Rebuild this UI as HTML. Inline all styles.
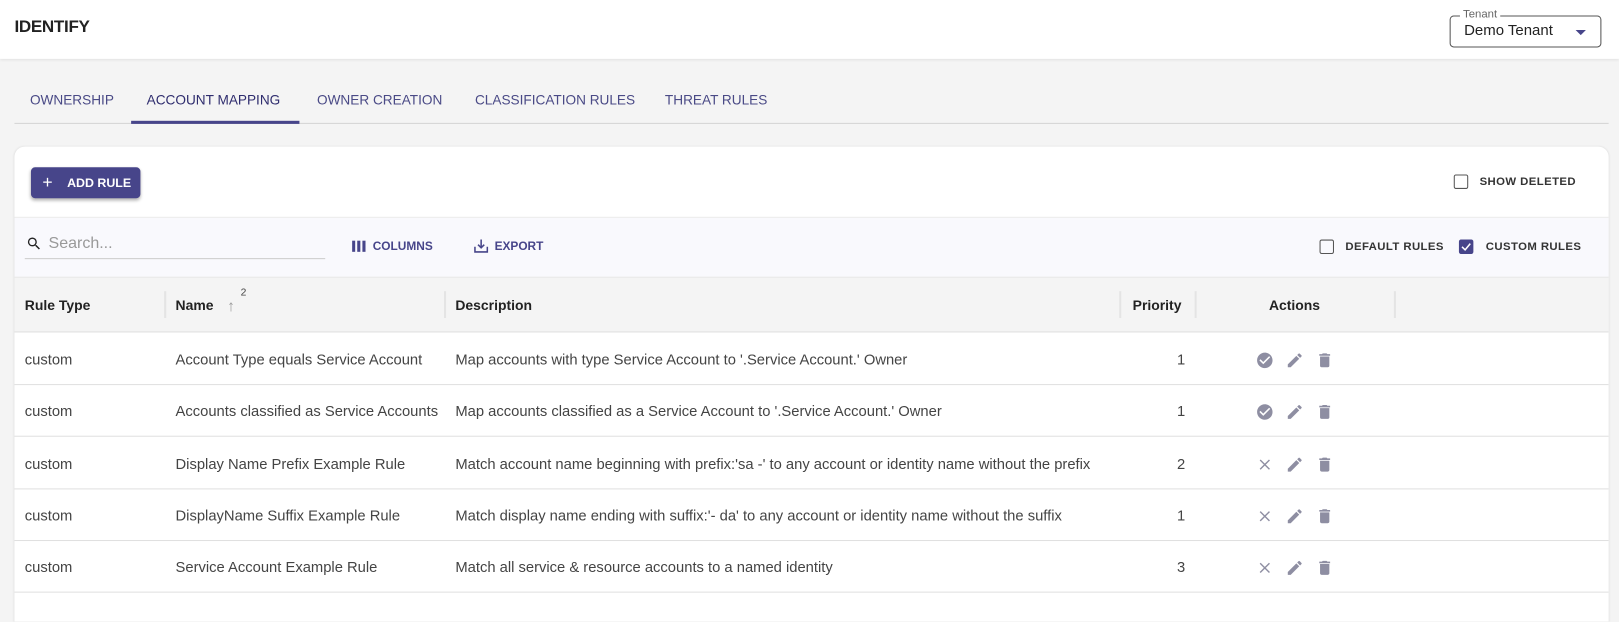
<!DOCTYPE html>
<html><head><meta charset="utf-8"><style>
*{box-sizing:border-box;margin:0;padding:0}
html,body{width:1619px;height:603px;overflow:hidden;background:#f4f4f4}
body{font-family:"Liberation Sans",Arial,sans-serif;color:#333}
#w{position:absolute;left:0;top:0;width:1568px;height:584px;transform:scale(1.0325);transform-origin:0 0}
.a{position:absolute;white-space:nowrap}
.hdr{position:absolute;left:0;top:0;width:1568px;height:57px;background:#fff;box-shadow:0 1px 3px rgba(0,0,0,.08)}
.tab{position:absolute;top:89px;font-size:13.2px;color:#4a4a86}
.card{position:absolute;left:14px;top:142px;width:1544px;height:460px;background:#fff;border-radius:10px 10px 0 0;box-shadow:0 0 2px rgba(0,0,0,.1);overflow:hidden}
.cb{position:absolute;width:14px;height:14px;border:1.5px solid #555;border-radius:2px}
.lbl{font-size:11px;font-weight:bold;letter-spacing:.4px;color:#333}
.th{font-size:13.5px;font-weight:bold;color:#222;top:146px}
.sep{position:absolute;top:140px;width:2px;height:26px;background:#e4e4e4}
.row{position:absolute;left:0;width:1544px;height:50px;border-bottom:1px solid #e0e0e0;font-size:14.3px;color:#444}
.row span{position:absolute;top:18px;white-space:nowrap}
.ic{position:absolute;top:17px}
</style></head><body><div id="w">
<div class="hdr"></div>
<div class="a" style="left:14px;top:17px;font-size:16.5px;color:#222;font-weight:bold;letter-spacing:-.3px">IDENTIFY</div>
<div style="position:absolute;left:1404px;top:15px;width:147px;height:31px;border:1px solid #555;border-radius:4px"></div>
<div class="a" style="left:1414px;top:8px;font-size:11px;color:#666;background:#fff;padding:0 3px">Tenant</div>
<div class="a" style="left:1418px;top:22px;font-size:14.5px;color:#222">Demo Tenant</div>
<div style="position:absolute;left:1526px;top:29px;border-left:5px solid transparent;border-right:5px solid transparent;border-top:5px solid #47458a"></div>

<div class="tab" style="left:29px">OWNERSHIP</div>
<div class="tab" style="left:142px;color:#2f2d6e">ACCOUNT MAPPING</div>
<div class="tab" style="left:307px">OWNER CREATION</div>
<div class="tab" style="left:460px">CLASSIFICATION RULES</div>
<div class="tab" style="left:644px">THREAT RULES</div>
<div style="position:absolute;left:14px;top:119px;width:1544px;height:1px;background:#d4d4d4"></div>
<div style="position:absolute;left:127px;top:117px;width:163px;height:3px;background:#47458a"></div>

<div class="card">
 <div style="position:absolute;left:16px;top:20px;width:106px;height:30px;background:#47458a;border-radius:4px;box-shadow:0 2px 3px rgba(0,0,0,.3);color:#fff;font-size:12px;font-weight:bold">
  <span class="a" style="left:11px;top:5px;font-size:17px;font-weight:normal">+</span><span class="a" style="left:35px;top:8px">ADD RULE</span></div>
 <div class="cb" style="left:1394px;top:27px"></div>
 <div class="a lbl" style="left:1419px;top:28px">SHOW DELETED</div>
 <div style="position:absolute;left:0;top:68px;width:1544px;height:58px;background:#f9f9fd;border-top:1px solid #ececec"></div>
 <svg class="a" style="left:11px;top:86px" width="16" height="16" viewBox="0 0 24 24"><path d="M15.5 14h-.79l-.28-.27A6.47 6.47 0 0016 9.5 6.5 6.5 0 109.5 16c1.61 0 3.09-.59 4.230-1.57l.27.28v.79l5 4.99L20.49 19l-4.99-5zm-6 0C7.01 14 5 11.99 5 9.5S7.01 5 9.5 5 14 7.01 14 9.5 11.99 14 9.5 14z" fill="#222"/></svg>
 <div class="a" style="left:33px;top:85px;font-size:15.5px;color:#999">Search...</div>
 <div style="position:absolute;left:10px;top:108px;width:291px;height:1px;background:#ccc"></div>
 <svg class="a" style="left:327px;top:91px" width="14" height="11" viewBox="0 0 14 11"><rect x="0" y="0" width="3" height="11" fill="#47458a"/><rect x="5" y="0" width="3" height="11" fill="#47458a"/><rect x="10" y="0" width="3" height="11" fill="#47458a"/></svg>
 <div class="a" style="left:347px;top:91px;font-size:11.5px;font-weight:bold;color:#47458a">COLUMNS</div>
 <svg class="a" style="left:445px;top:89px" width="14" height="14" viewBox="0 0 14 14"><path d="M1 8v5h12V8M7 1v8M4 6l3 3 3-3" stroke="#47458a" stroke-width="1.5" fill="none"/></svg>
 <div class="a" style="left:465px;top:91px;font-size:11.5px;font-weight:bold;color:#47458a">EXPORT</div>
 <div class="cb" style="left:1264px;top:90px"></div>
 <div class="a lbl" style="left:1289px;top:91px">DEFAULT RULES</div>
 <div class="cb" style="left:1399px;top:90px;background:#47458a;border-color:#47458a"><svg style="position:absolute;left:1px;top:1px" width="10" height="10" viewBox="0 0 10 10"><path d="M1 5l3 3 5-6" stroke="#fff" stroke-width="1.5" fill="none"/></svg></div>
 <div class="a lbl" style="left:1425px;top:91px">CUSTOM RULES</div>
 <div style="position:absolute;left:0;top:126px;width:1544px;height:54px;background:#f4f4f4;border-top:1px solid #e8e8e8;border-bottom:1px solid #e0e0e0"></div>
 <div class="a th" style="left:10px">Rule Type</div>
 <div class="sep" style="left:145px"></div>
 <div class="a th" style="left:156px">Name</div>
 <div class="a" style="left:206px;top:146px;color:#999;font-size:15px">↑</div>
 <div class="a" style="left:219px;top:136px;font-size:10px;color:#444">2</div>
 <div class="sep" style="left:416px"></div>
 <div class="a th" style="left:427px">Description</div>
 <div class="sep" style="left:1070px"></div>
 <div class="a th" style="left:1083px">Priority</div>
 <div class="sep" style="left:1143px"></div>
 <div class="a th" style="left:1215px">Actions</div>
 <div class="sep" style="left:1336px"></div>
 <div class="row" style="top:181px"><span style="left:10px">custom</span><span style="left:156px">Account Type equals Service Account</span><span style="left:427px">Map accounts with type Service Account to '.Service Account.' Owner</span><span style="left:1126px">1</span>
  <svg class="ic" style="left:1202px" width="18" height="18" viewBox="0 0 24 24"><path d="M12 2C6.48 2 2 6.48 2 12s4.48 10 10 10 10-4.48 10-10S17.52 2 12 2zm-2 15l-5-5 1.41-1.41L10 14.17l7.59-7.59L19 8l-9 9z" fill="#8e8ea2"/></svg>
  <svg class="ic" style="left:1231px" width="18" height="18" viewBox="0 0 24 24"><path d="M3 17.25V21h3.75L17.81 9.94l-3.75-3.75L3 17.25zM20.71 7.04a1 1 0 000-1.41l-2.34-2.34a1 1 0 00-1.41 0l-1.83 1.83 3.75 3.75 1.83-1.83z" fill="#8e8ea2"/></svg>
  <svg class="ic" style="left:1260px" width="18" height="18" viewBox="0 0 24 24"><path d="M6 19c0 1.1.9 2 2 2h8c1.1 0 2-.9 2-2V7H6v12zM19 4h-3.5l-1-1h-5l-1 1H5v2h14V4z" fill="#8e8ea2"/></svg></div>
 <div class="row" style="top:231px"><span style="left:10px">custom</span><span style="left:156px">Accounts classified as Service Accounts</span><span style="left:427px">Map accounts classified as a Service Account to '.Service Account.' Owner</span><span style="left:1126px">1</span>
  <svg class="ic" style="left:1202px" width="18" height="18" viewBox="0 0 24 24"><path d="M12 2C6.48 2 2 6.48 2 12s4.48 10 10 10 10-4.48 10-10S17.52 2 12 2zm-2 15l-5-5 1.41-1.41L10 14.17l7.59-7.59L19 8l-9 9z" fill="#8e8ea2"/></svg>
  <svg class="ic" style="left:1231px" width="18" height="18" viewBox="0 0 24 24"><path d="M3 17.25V21h3.75L17.81 9.94l-3.75-3.75L3 17.25zM20.71 7.04a1 1 0 000-1.41l-2.34-2.34a1 1 0 00-1.41 0l-1.83 1.83 3.75 3.75 1.83-1.83z" fill="#8e8ea2"/></svg>
  <svg class="ic" style="left:1260px" width="18" height="18" viewBox="0 0 24 24"><path d="M6 19c0 1.1.9 2 2 2h8c1.1 0 2-.9 2-2V7H6v12zM19 4h-3.5l-1-1h-5l-1 1H5v2h14V4z" fill="#8e8ea2"/></svg></div>
 <div class="row" style="top:282px"><span style="left:10px">custom</span><span style="left:156px">Display Name Prefix Example Rule</span><span style="left:427px">Match account name beginning with prefix:'sa -' to any account or identity name without the prefix</span><span style="left:1126px">2</span>
  <svg class="ic" style="left:1202px" width="18" height="18" viewBox="0 0 24 24"><path d="M6 6l12 12M18 6L6 18" stroke="#8e8ea2" stroke-width="1.8"/></svg>
  <svg class="ic" style="left:1231px" width="18" height="18" viewBox="0 0 24 24"><path d="M3 17.25V21h3.75L17.81 9.94l-3.75-3.75L3 17.25zM20.71 7.04a1 1 0 000-1.41l-2.34-2.34a1 1 0 00-1.41 0l-1.83 1.83 3.75 3.75 1.83-1.83z" fill="#8e8ea2"/></svg>
  <svg class="ic" style="left:1260px" width="18" height="18" viewBox="0 0 24 24"><path d="M6 19c0 1.1.9 2 2 2h8c1.1 0 2-.9 2-2V7H6v12zM19 4h-3.5l-1-1h-5l-1 1H5v2h14V4z" fill="#8e8ea2"/></svg></div>
 <div class="row" style="top:332px"><span style="left:10px">custom</span><span style="left:156px">DisplayName Suffix Example Rule</span><span style="left:427px">Match display name ending with suffix:'- da' to any account or identity name without the suffix</span><span style="left:1126px">1</span>
  <svg class="ic" style="left:1202px" width="18" height="18" viewBox="0 0 24 24"><path d="M6 6l12 12M18 6L6 18" stroke="#8e8ea2" stroke-width="1.8"/></svg>
  <svg class="ic" style="left:1231px" width="18" height="18" viewBox="0 0 24 24"><path d="M3 17.25V21h3.75L17.81 9.94l-3.75-3.75L3 17.25zM20.71 7.04a1 1 0 000-1.41l-2.34-2.34a1 1 0 00-1.41 0l-1.83 1.83 3.75 3.75 1.83-1.83z" fill="#8e8ea2"/></svg>
  <svg class="ic" style="left:1260px" width="18" height="18" viewBox="0 0 24 24"><path d="M6 19c0 1.1.9 2 2 2h8c1.1 0 2-.9 2-2V7H6v12zM19 4h-3.5l-1-1h-5l-1 1H5v2h14V4z" fill="#8e8ea2"/></svg></div>
 <div class="row" style="top:382px"><span style="left:10px">custom</span><span style="left:156px">Service Account Example Rule</span><span style="left:427px">Match all service &amp; resource accounts to a named identity</span><span style="left:1126px">3</span>
  <svg class="ic" style="left:1202px" width="18" height="18" viewBox="0 0 24 24"><path d="M6 6l12 12M18 6L6 18" stroke="#8e8ea2" stroke-width="1.8"/></svg>
  <svg class="ic" style="left:1231px" width="18" height="18" viewBox="0 0 24 24"><path d="M3 17.25V21h3.75L17.81 9.94l-3.75-3.75L3 17.25zM20.71 7.04a1 1 0 000-1.41l-2.34-2.34a1 1 0 00-1.41 0l-1.83 1.83 3.75 3.75 1.83-1.83z" fill="#8e8ea2"/></svg>
  <svg class="ic" style="left:1260px" width="18" height="18" viewBox="0 0 24 24"><path d="M6 19c0 1.1.9 2 2 2h8c1.1 0 2-.9 2-2V7H6v12zM19 4h-3.5l-1-1h-5l-1 1H5v2h14V4z" fill="#8e8ea2"/></svg></div>
</div>
</div></body></html>
